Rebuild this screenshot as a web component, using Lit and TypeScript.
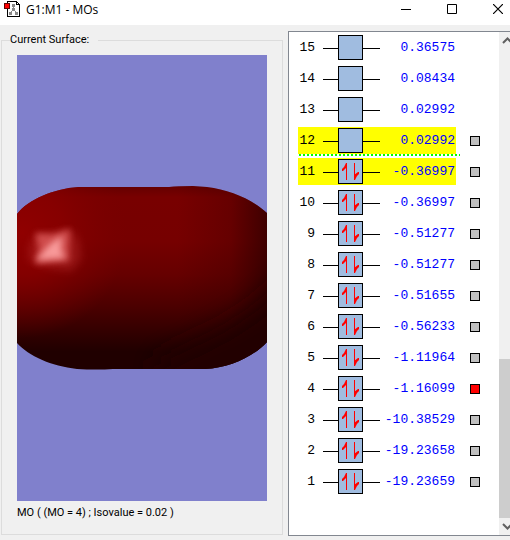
import { LitElement, html, css, svg, nothing } from "lit";
import { customElement, property, state } from "lit/decorators.js";
import { classMap } from "lit/directives/class-map.js";

interface Orbital {
  n: number;
  energy: string;
  filled: boolean;
  swatch: boolean;
  frontier?: boolean;
}

const ORBITALS: Orbital[] = [
  { n: 15, energy: "0.36575", filled: false, swatch: false },
  { n: 14, energy: "0.08434", filled: false, swatch: false },
  { n: 13, energy: "0.02992", filled: false, swatch: false },
  { n: 12, energy: "0.02992", filled: false, swatch: true, frontier: true },
  { n: 11, energy: "-0.36997", filled: true, swatch: true, frontier: true },
  { n: 10, energy: "-0.36997", filled: true, swatch: true },
  { n: 9, energy: "-0.51277", filled: true, swatch: true },
  { n: 8, energy: "-0.51277", filled: true, swatch: true },
  { n: 7, energy: "-0.51655", filled: true, swatch: true },
  { n: 6, energy: "-0.56233", filled: true, swatch: true },
  { n: 5, energy: "-1.11964", filled: true, swatch: true },
  { n: 4, energy: "-1.16099", filled: true, swatch: true },
  { n: 3, energy: "-10.38529", filled: true, swatch: true },
  { n: 2, energy: "-19.23658", filled: true, swatch: true },
  { n: 1, energy: "-19.23659", filled: true, swatch: true },
];

@customElement("title-bar")
export class TitleBar extends LitElement {
  @property() heading = "";

  static styles = css`
    :host {
      display: flex;
      align-items: flex-start;
      height: 25px;
      background: #fff;
      overflow: hidden;
    }
    .icon {
      flex: none;
      margin: 1px 5px 0 4px;
    }
    h1 {
      flex: 1;
      margin: 0;
      font: 12px/20px "Open Sans", "Noto Sans", sans-serif;
      color: #000;
      white-space: nowrap;
    }
    .buttons {
      display: flex;
      flex: none;
      margin-right: -11px;
    }
    button {
      width: 46px;
      height: 18px;
      padding: 0;
      border: 0;
      background: none;
      display: grid;
      place-items: center;
    }
    svg {
      display: block;
    }
  `;

  render() {
    return html`
      <svg class="icon" width="17" height="17" viewBox="0 0 17 17" shape-rendering="crispEdges" aria-hidden="true">
        <path d="M3.5 .5H12.5L15.5 3.5V15.5H3.5Z" fill="#fff" stroke="#000" />
        <path d="M12.5 .5V3.5H15.5" fill="none" stroke="#000" />
        <path d="M9.5 5V9M9.5 8L6 13M9.5 8L13 13" fill="none" stroke="#888" />
        <path d="M8 3h3v3H8zM8 7h3v3H8zM5 11h3v3H5zM11 11h3v3h-3z" fill="#888" />
        <path d="M.5 2.5H5.5V7.5H.5Z" fill="#f00" stroke="#600000" />
      </svg>
      <h1>${this.heading}</h1>
      <div class="buttons">
        <button aria-label="Minimize">
          <svg width="10" height="10"><path d="M0 5.5H10" stroke="#000" /></svg>
        </button>
        <button aria-label="Maximize">
          <svg width="10" height="10"><path d="M.5 .5H9.5V9.5H.5Z" fill="none" stroke="#000" /></svg>
        </button>
        <button aria-label="Close">
          <svg width="10" height="10"><path d="M0 0L10 10M10 0L0 10" stroke="#000" stroke-width="1.2" /></svg>
        </button>
      </div>
    `;
  }
}

@customElement("surface-view")
export class SurfaceView extends LitElement {
  static styles = css`
    :host {
      display: block;
      position: relative;
      background: #8080cc;
      overflow: hidden;
    }
    svg {
      position: absolute;
      inset: 0;
      width: 100%;
      height: 100%;
    }
  `;

  render() {
    return html`
      <svg viewBox="0 0 250 446" preserveAspectRatio="xMidYMid slice" role="img" aria-label="Orbital surface">
        <defs>
          <clipPath id="body">
            <path
              d="M0 159C12 144 36 134 61 132H152Q160 131 176 131L190 132C214 135 236 145 250 158V287C236 302 212 313 188 314H96Q80 315 60 314C34 311 12 301 0 288Z"
            />
          </clipPath>
          <linearGradient id="base" x1="0" y1="131" x2="0" y2="315" gradientUnits="userSpaceOnUse">
            <stop offset="0" stop-color="#640000" />
            <stop offset=".06" stop-color="#780000" />
            <stop offset=".3" stop-color="#760000" />
            <stop offset=".48" stop-color="#660000" />
            <stop offset=".65" stop-color="#4c0000" />
            <stop offset=".82" stop-color="#2e0000" />
            <stop offset=".9" stop-color="#200000" />
            <stop offset="1" stop-color="#200000" />
          </linearGradient>
          <radialGradient id="lit" cx="5" cy="178" r="105" gradientUnits="userSpaceOnUse">
            <stop offset="0" stop-color="#900000" />
            <stop offset=".4" stop-color="#8a0000" stop-opacity=".8" />
            <stop offset="1" stop-color="#7c0000" stop-opacity="0" />
          </radialGradient>
          <linearGradient id="edge" x1="160" y1="0" x2="250" y2="0" gradientUnits="userSpaceOnUse">
            <stop offset="0" stop-color="#200000" stop-opacity="0" />
            <stop offset=".6" stop-color="#200000" stop-opacity=".2" />
            <stop offset="1" stop-color="#200000" stop-opacity=".65" />
          </linearGradient>
          <filter id="soft" x="-50%" y="-50%" width="200%" height="200%"><feGaussianBlur stdDeviation="13" /></filter>
          <filter id="mist" x="-50%" y="-50%" width="200%" height="200%"><feGaussianBlur stdDeviation="4" /></filter>
          <filter id="fine" x="-50%" y="-50%" width="200%" height="200%"><feGaussianBlur stdDeviation="3" /></filter>
        </defs>
        <g clip-path="url(#body)">
          <rect y="125" width="250" height="200" fill="url(#base)" />
          <rect y="125" width="250" height="200" fill="url(#lit)" />
          <rect y="125" width="250" height="200" fill="url(#edge)" />
          <path d="M280 215L240 252L205 275L140 306V340H280Z" fill="#200000" filter="url(#soft)" />
          <path d="M12 192L18 180L36 178L54 174L62 186L64 204L54 216L30 212L12 206Z" fill="#c83c3c" opacity=".35" filter="url(#mist)" />
          <path d="M18 178L36 179L53 174L52 192L52 206L36 207L18 209L22 194Z" fill="#e46464" opacity=".7" filter="url(#fine)" />
          <path d="M19 205L33 189L45 181L44 195L48 203Z" fill="#ffa8a8" opacity=".85" filter="url(#fine)" />
        </g>
      </svg>
    `;
  }
}

@customElement("orbital-list")
export class OrbitalList extends LitElement {
  @state() private selected = 4;

  static styles = css`
    :host {
      display: flex;
      border: 1px solid #828790;
      border-right: 0;
      background: #fff;
      overflow: hidden;
    }
    .area {
      flex: 1;
      padding-left: 9px;
    }
    table {
      border-collapse: collapse;
    }
    tr {
      height: 31px;
    }
    td,
    th {
      padding: 2px 0;
      font: 13px/27px "Liberation Mono", monospace;
      text-align: right;
      color: #00f;
    }
    .cell {
      height: 27px;
    }
    .frontier .cell {
      background: #ff0;
    }
    .number {
      width: 25px;
      color: #000;
    }
    .number .cell {
      padding-right: 8px;
    }
    .level {
      width: 57px;
    }
    .energy {
      width: 76px;
    }
    .energy .cell {
      padding-right: 1px;
    }
    .pick {
      width: 24px;
      line-height: 0;
    }
    .lumo {
      background: repeating-linear-gradient(90deg, #00ff00 0 2px, #fff 2px 4px) 1px 100% / 161px 2px no-repeat;
    }
    svg {
      display: block;
    }
    input {
      appearance: none;
      width: 10px;
      height: 10px;
      margin: 0;
      border: 1px solid #000;
      background: #c0c0c0;
    }
    input:checked {
      background: #f00;
    }
    .scrollbar {
      flex: none;
      display: flex;
      flex-direction: column;
      width: 11px;
      background: #f0f0f0;
    }
    .scrollbar button {
      height: 17px;
      padding: 0;
      border: 0;
      background: none;
    }
    .track {
      flex: 1;
      display: flex;
      align-items: flex-end;
    }
    .thumb {
      width: 100%;
      height: 34%;
      background: #cdcdcd;
    }
  `;

  private level(filled: boolean) {
    return html`<svg width="57" height="27" aria-hidden="true">
      <path d="M0 14.5H57" stroke="#000" />
      <rect x="15.5" y="1.5" width="24" height="24" fill="#a0bce0" stroke="#000" />
      ${filled
        ? svg`<path d="M23.5 5V22M31.5 5V22" stroke="#f00" />
              <path d="M24 5H23L21 9L19 11V13H20L24 9ZM31 22H32L34 18L36 16V14H35L31 17Z" fill="#f00" />`
        : nothing}
    </svg>`;
  }

  render() {
    return html`
      <div class="area">
        <table>
          <tbody>
            ${ORBITALS.map(
              (o) => html`<tr class=${classMap({ frontier: !!o.frontier, lumo: o.n === 12 })}>
                <th class="number" scope="row"><div class="cell">${o.n}</div></th>
                <td class="level"><div class="cell">${this.level(o.filled)}</div></td>
                <td class="energy"><div class="cell">${o.energy}</div></td>
                <td class="pick">
                  ${o.swatch
                    ? html`<input
                        type="radio"
                        name="orbital"
                        aria-label="Orbital ${o.n}"
                        .checked=${this.selected === o.n}
                        @change=${() => (this.selected = o.n)}
                      />`
                    : nothing}
                </td>
              </tr>`
            )}
          </tbody>
        </table>
      </div>
      <div class="scrollbar">
        <button aria-label="Scroll up">
          <svg width="11" height="17"><path d="M4 11L8.5 6.5L13 11" fill="none" stroke="#606060" stroke-width="2" /></svg>
        </button>
        <div class="track"><div class="thumb"></div></div>
        <button aria-label="Scroll down">
          <svg width="11" height="17"><path d="M4 6L8.5 10.5L13 6" fill="none" stroke="#606060" stroke-width="2" /></svg>
        </button>
      </div>
    `;
  }
}

@customElement("app-root")
export class AppRoot extends LitElement {
  static styles = css`
    :host {
      display: flex;
      flex-direction: column;
      min-height: 100vh;
      background: #f0f0f0;
      font: 11px/14px Roboto, "Liberation Sans", Arial, sans-serif;
      color: #000;
    }
    main {
      flex: 1;
      display: flex;
      gap: 5px;
      padding: 6px 0 4px 1px;
    }
    fieldset {
      flex: 1;
      min-width: 0;
      display: flex;
      flex-direction: column;
      margin: 2px 0 1px;
      padding: 8px 15px 14px;
      border: 1px solid #dcdcdc;
    }
    legend {
      margin-left: -7px;
      padding: 0 9px 0 0;
    }
    surface-view {
      flex: 1;
    }
    p {
      margin: 5px 0 0;
    }
    orbital-list {
      flex: none;
      width: 221px;
    }
  `;

  render() {
    return html`
      <title-bar heading="G1:M1 - MOs"></title-bar>
      <main>
        <fieldset>
          <legend>Current Surface:</legend>
          <surface-view></surface-view>
          <p>MO ( (MO = 4) ; Isovalue = 0.02 )</p>
        </fieldset>
        <orbital-list></orbital-list>
      </main>
    `;
  }
}
